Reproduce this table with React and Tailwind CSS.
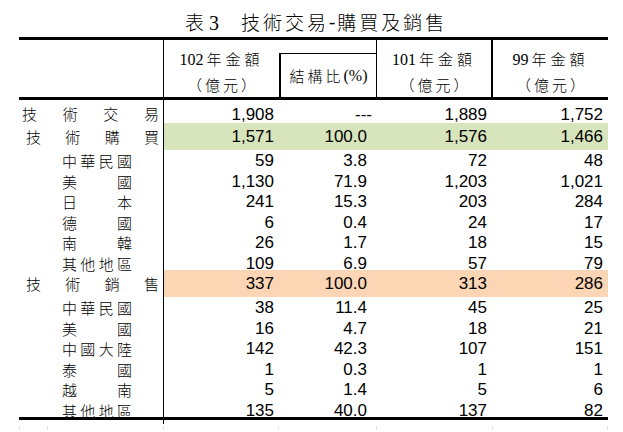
const cjk = { fontFamily: '"Noto Sans CJK TC", "Noto Sans CJK SC", sans-serif' };
const serif = { fontFamily: '"Liberation Serif", "Noto Sans CJK TC", serif' };
const num = { fontFamily: '"Liberation Sans", Arial, sans-serif' };

const rows = [
  { label: "技術交易", kind: "main", h: "h-[23px]", v: ["1,908", "---", "1,889", "1,752"] },
  { label: "技術購買", kind: "group", h: "h-[24px]", bg: "bg-[#d8e4bc]", v: ["1,571", "100.0", "1,576", "1,466"] },
  { label: "中華民國", h: "h-[21px]", v: ["59", "3.8", "72", "48"] },
  { label: "美國", h: "h-[20px]", v: ["1,130", "71.9", "1,203", "1,021"] },
  { label: "日本", h: "h-[21px]", v: ["241", "15.3", "203", "284"] },
  { label: "德國", h: "h-[20px]", v: ["6", "0.4", "24", "17"] },
  { label: "南韓", h: "h-[21px]", v: ["26", "1.7", "18", "15"] },
  { label: "其他地區", h: "h-[20px]", v: ["109", "6.9", "57", "79"] },
  { label: "技術銷售", kind: "group", h: "h-[24px]", bg: "bg-[#fcd5b4]", v: ["337", "100.0", "313", "286"] },
  { label: "中華民國", h: "h-[21px]", v: ["38", "11.4", "45", "25"] },
  { label: "美國", h: "h-[20px]", v: ["16", "4.7", "18", "21"] },
  { label: "中國大陸", h: "h-[21px]", v: ["142", "42.3", "107", "151"] },
  { label: "泰國", h: "h-[20px]", v: ["1", "0.3", "1", "1"] },
  { label: "越南", h: "h-[21px]", v: ["5", "1.4", "5", "6"] },
  { label: "其他地區", h: "h-[20px]", v: ["135", "40.0", "137", "82"] },
];

const cols = "grid grid-cols-[145px_115px_98px_116px_115px]";
const pads = ["pr-[5px]", "pr-[10px]", "pr-[6px]", "pr-[5px]"];

function Label({ text, kind }) {
  const chars = text.split("");
  let box = "ml-[43px] w-[70px]";
  if (kind === "main") box = "ml-[3px] w-[137px]";
  if (kind === "group") box = "ml-[7px] w-[133px]";
  return (
    <div className={`flex justify-between text-[15px] font-light ${box}`} style={cjk}>
      {chars.map((c, i) => (
        <span key={i}>{c}</span>
      ))}
    </div>
  );
}

function HeadAmount({ year }) {
  return (
    <div className="flex flex-col items-center justify-center pt-[6px] leading-[25px] text-[15px]" style={serif}>
      <div className="flex items-baseline">
        <span className="text-[16px]">{year}</span>
        <span className="tracking-[4px] ml-[3px] font-light" style={cjk}>年金額</span>
      </div>
      <div className="tracking-[3px] pl-[3px] font-light" style={cjk}>（億元）</div>
    </div>
  );
}

export default function App() {
  return (
    <div className="w-[623px] h-[432px] bg-white text-black overflow-hidden">
      <div className="h-[37px] pt-[8px] pl-[185px] flex items-center text-[19px]" style={serif}>
        <span className="font-light" style={cjk}>表</span>
        <span className="ml-[5px] text-[20px]">3</span>
        <span className="ml-[22px] tracking-[3px] font-light" style={cjk}>技術交易</span>
        <span className="mr-[2px]">-</span>
        <span className="tracking-[3px] font-light" style={cjk}>購買及銷售</span>
      </div>

      <div className="ml-[19px] w-[589px] border-t-[3px] border-black">
        <div className={`${cols} h-[60px] border-b-[3px] border-black`}>
          <div className="border-r border-black" />
          <HeadAmount year="102" />
          <div className="flex flex-col border-r border-black">
            <div className="h-[13px]" />
            <div className="flex-1 flex items-center justify-center border-t border-l-2 border-black text-[15px] pt-[1px]" style={serif}>
              <span className="tracking-[3px] font-light" style={cjk}>結構比</span>
              <span className="text-[16px]">(%)</span>
            </div>
          </div>
          <div className="border-r-2 border-black">
            <HeadAmount year="101" />
          </div>
          <HeadAmount year="99" />
        </div>

        {rows.map((r, i) => (
          <div key={i} className={`${cols} ${r.h}`}>
            <div className="flex items-center border-r border-black pt-[1px]">
              <Label text={r.label} kind={r.kind} />
            </div>
            {r.v.map((v, j) => (
              <div
                key={j}
                className={`flex items-center justify-end text-[17px] ${r.bg || ""} ${v === "---" ? "pr-[5px]" : pads[j]} ${i === 0 ? "pt-[2px]" : "pt-[1px]"}`}
                style={num}
              >
                {v}
              </div>
            ))}
          </div>
        ))}

        <div className="border-t-[3px] border-black" />
        <div className={`${cols} h-[3px] mt-[7px]`}>
          <div className="flex border-r border-[#dddddd]">
            <div className="w-[29px] border-l border-r border-[#dddddd]" />
          </div>
          <div className="border-r border-[#dddddd]" />
          <div className="border-r border-[#dddddd]" />
          <div className="border-r border-[#dddddd]" />
          <div className="border-r border-[#dddddd]" />
        </div>
      </div>
    </div>
  );
}
